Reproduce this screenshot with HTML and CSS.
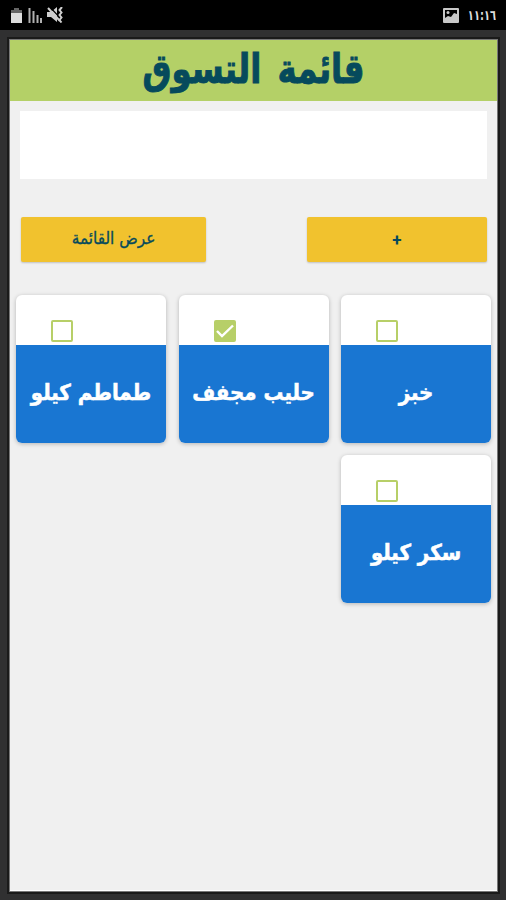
FILE: index.html
```html
<!DOCTYPE html>
<html lang="ar" dir="rtl">
<head>
    <meta charset="UTF-8">
    <meta name="viewport" content="width=device-width, initial-scale=1.0">
    <title>قائمة التسوق</title>
    <link rel="stylesheet" href="styles.css">
</head>
<body>
    <div class="status-bar">
        <div class="status-group">
            <span class="time">١١:١٦</span>
            <svg width="16" height="15" viewBox="0 0 16 15">
                <path fill="#c8c8c8" fill-rule="evenodd" d="M1 0h14a1 1 0 0 1 1 1v13a1 1 0 0 1-1 1H1a1 1 0 0 1-1-1V1a1 1 0 0 1 1-1zM2 2v8l3-2 3 1 3-4 3 1V2z"/>
                <circle cx="5" cy="4.500" r="1.500" fill="#c8c8c8"/>
            </svg>
        </div>
        <div class="status-group icons">
            <svg width="12" height="15" viewBox="0 0 12 15">
                <path fill="#666" d="M3 0h5v2h3v4H0V2h3z"/>
                <path fill="#ddd" d="M0 5h11v10H0z"/>
            </svg>
            <svg width="14" height="15" viewBox="0 0 14 15">
                <path stroke="#b0b0b0" stroke-width="2" d="M1.500 0v15M5.500 3v12M9.500 7v8M13 10v5"/>
            </svg>
            <svg width="16" height="16" viewBox="0 0 16 16">
                <path fill="#d0d0d0" d="M0 5h4l6-5v15l-6-5H0z"/>
                <path stroke="#000" stroke-width="1.200" d="M3 0l12 13"/>
                <path stroke="#d0d0d0" stroke-width="2" d="M1 1l12 13"/>
                <path stroke="#d0d0d0" stroke-width="2" fill="none" d="M15 0l-2.500 3 2 2.500-2 2.500 2 2.500-2 2.500 2 2.500"/>
            </svg>
        </div>
    </div>
    <div class="screen">
        <h1><span class="title">قائمة التسوق</span></h1>
        <input type="text" class="item-input" id="item">
        <div class="buttons">
            <button type="button" class="add">+</button>
            <button type="button" class="show">عرض القائمة</button>
        </div>
        <div class="cards">
            <div class="card">
                <label class="card-top"><span class="box"></span></label>
                <div class="card-name">خبز</div>
            </div>
            <div class="card">
                <label class="card-top">
                    <span class="box checked">
                        <svg width="18" height="18" viewBox="0 0 18 18">
                            <path fill="none" stroke="#fff" stroke-width="2.400" d="M1 9l5 5L17 3.500"/>
                        </svg>
                    </span>
                </label>
                <div class="card-name">حليب مجفف</div>
            </div>
            <div class="card">
                <label class="card-top"><span class="box"></span></label>
                <div class="card-name">طماطم كيلو</div>
            </div>
            <div class="card">
                <label class="card-top"><span class="box"></span></label>
                <div class="card-name">سكر كيلو</div>
            </div>
        </div>
    </div>
</body>
</html>
```

FILE: styles.css
```css
* {
    box-sizing: border-box;
}

body {
    font-family: "DejaVu Sans Condensed", "DejaVu Sans", sans-serif;
    font-stretch: condensed;
    background-color: #303031;
    margin: 0;
    height: 900px;
    overflow: hidden;
}

.status-bar {
    display: flex;
    justify-content: space-between;
    align-items: center;
    height: 30px;
    padding: 0 10px 0 11px;
    background-color: #000;
}

.status-group {
    display: flex;
    align-items: center;
    gap: 9px;
}

.status-group.icons {
    direction: ltr;
    gap: 5px;
}

.time {
    color: #ddd;
    font-size: 11px;
    font-weight: bold;
    letter-spacing: -0.6px;
    transform: scaleY(1.25);
}

.screen {
    margin: 10px 9px 0 10px;
    height: 851px;
    background-color: #f0f0f0;
    border-bottom: 1px solid #fff;
    box-shadow: 0 0 0 1px #777, 0 0 0 3px #1a1a1a;
}

h1 {
    margin: 0;
    height: 61px;
    line-height: 57px;
    background-color: #b4d067;
    color: #064a5c;
    font-size: 36px;
    text-align: center;
}

.title {
    display: inline-block;
    word-spacing: 5px;
    transform: scaleY(1.15);
    -webkit-text-stroke: 0.8px #064a5c;
}

.item-input {
    display: block;
    width: 467px;
    height: 68px;
    margin: 10px 10px 0;
    border: none;
    background-color: #fff;
}

.buttons {
    display: flex;
    justify-content: space-between;
    margin: 38px 10px 0 11px;
}

button {
    height: 45px;
    padding: 0 0 3px;
    border: none;
    border-radius: 2px;
    background-color: #f1c22e;
    box-shadow: 0 1px 2px rgba(0, 0, 0, 0.2);
    color: #064a5c;
    font-family: inherit;
    font-stretch: inherit;
    font-size: 17px;
}

.add {
    width: 180px;
    padding: 0;
    font-family: Roboto, sans-serif;
    font-stretch: normal;
    font-weight: bold;
}

.show {
    width: 185px;
    -webkit-text-stroke: 0.3px #064a5c;
}

.cards {
    display: grid;
    grid-template-columns: repeat(3, 150px);
    justify-content: space-between;
    row-gap: 12px;
    margin: 33px 6px 0;
}

.card {
    height: 148px;
    border-radius: 6px;
    overflow: hidden;
    background-color: #fff;
    box-shadow: 0 1px 4px rgba(0, 0, 0, 0.25);
}

.card-top {
    display: flex;
    height: 50px;
    padding: 25px 93px 0 0;
}

.box {
    width: 22px;
    height: 22px;
    border: 2px solid #b7cf68;
    border-radius: 2px;
}

.checked {
    background-color: #b7cf68;
}

.box svg {
    display: block;
}

.card-name {
    height: 98px;
    line-height: 96px;
    background-color: #1976d2;
    color: #fff;
    font-size: 22px;
    font-weight: bold;
    text-align: center;
    white-space: nowrap;
    -webkit-text-stroke: 0.5px #fff;
}
```
